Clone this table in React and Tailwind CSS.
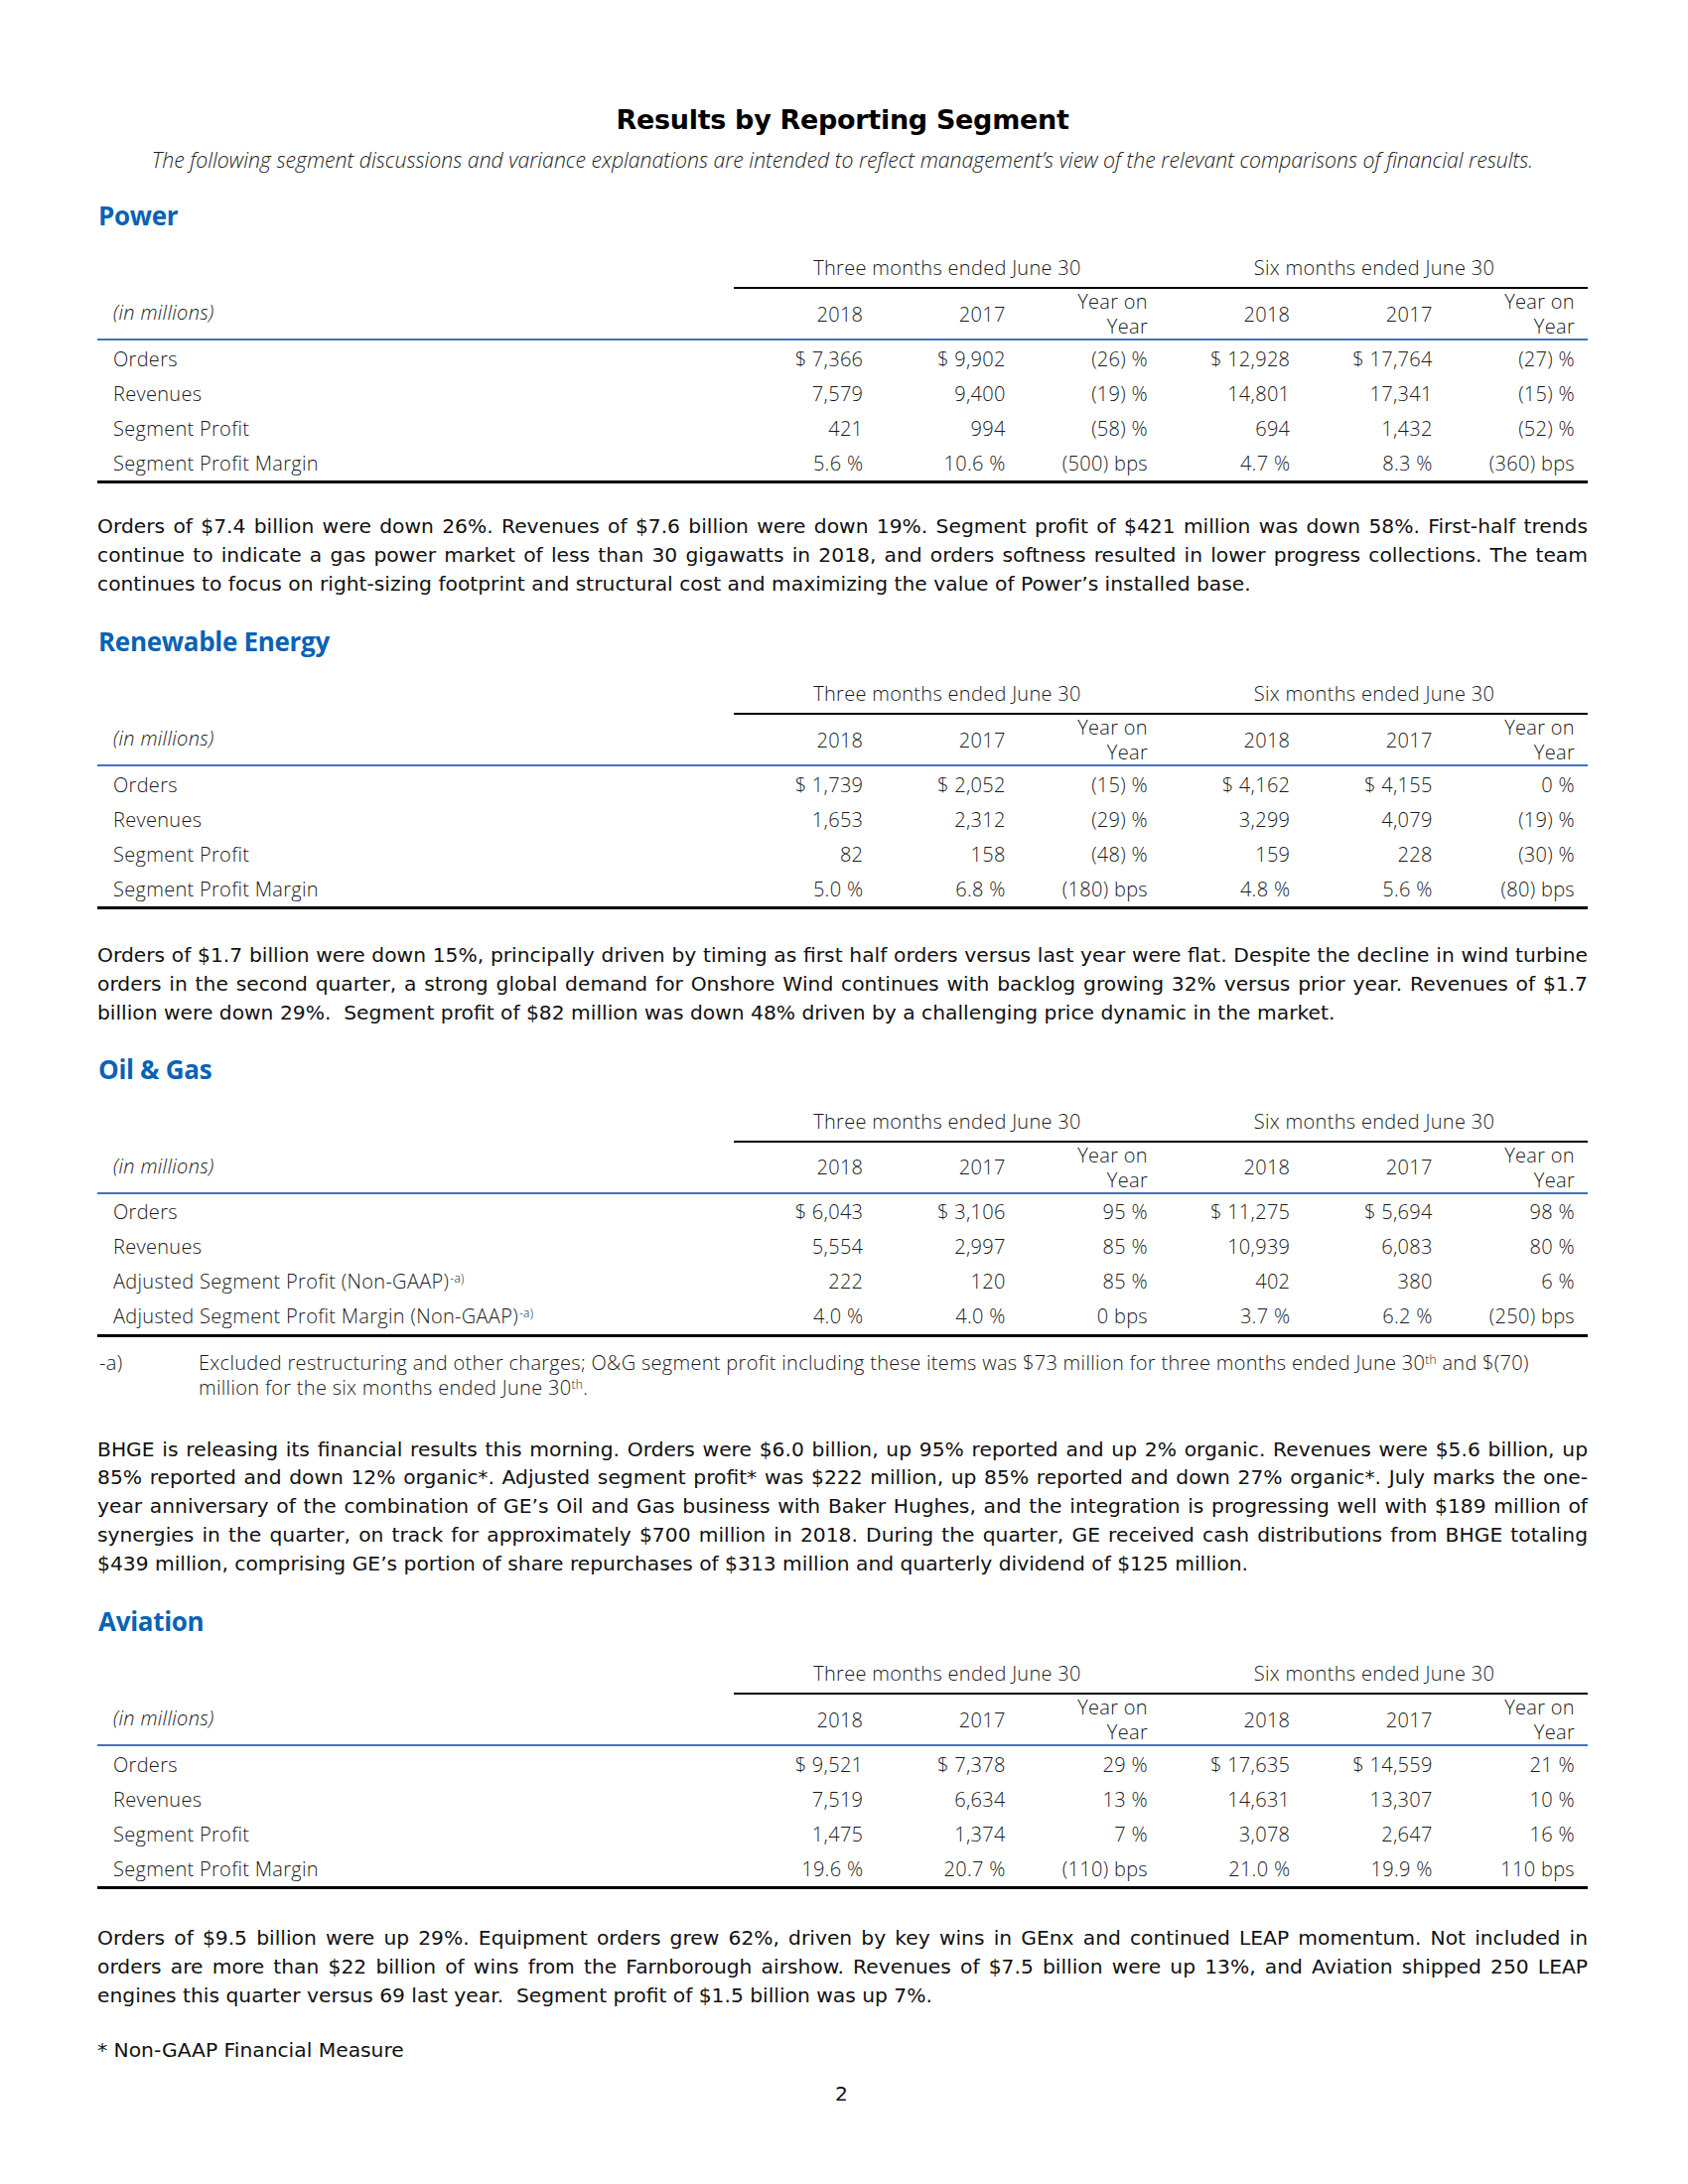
import React from 'react';

const segments = [
  {
    name: 'Power',
    top: 'mt-[27px]',
    paraTop: 'mt-[29px]',
    rows: [
      ['Orders', '$ 7,366', '$ 9,902', '(26) %', '$ 12,928', '$ 17,764', '(27) %'],
      ['Revenues', '7,579', '9,400', '(19) %', '14,801', '17,341', '(15) %'],
      ['Segment Profit', '421', '994', '(58) %', '694', '1,432', '(52) %'],
      ['Segment Profit Margin', '5.6 %', '10.6 %', '(500) bps', '4.7 %', '8.3 %', '(360) bps'],
    ],
    lines: [
      'Orders of $7.4 billion were down 26%. Revenues of $7.6 billion were down 19%. Segment profit of $421 million was down 58%. First-half trends',
      'continue to indicate a gas power market of less than 30 gigawatts in 2018, and orders softness resulted in lower progress collections. The team',
      'continues to focus on right-sizing footprint and structural cost and maximizing the value of Power’s installed base.',
    ],
  },
  {
    name: 'Renewable Energy',
    top: 'mt-[28px]',
    paraTop: 'mt-[32px]',
    rows: [
      ['Orders', '$ 1,739', '$ 2,052', '(15) %', '$ 4,162', '$ 4,155', '0 %'],
      ['Revenues', '1,653', '2,312', '(29) %', '3,299', '4,079', '(19) %'],
      ['Segment Profit', '82', '158', '(48) %', '159', '228', '(30) %'],
      ['Segment Profit Margin', '5.0 %', '6.8 %', '(180) bps', '4.8 %', '5.6 %', '(80) bps'],
    ],
    lines: [
      'Orders of $1.7 billion were down 15%, principally driven by timing as first half orders versus last year were flat. Despite the decline in wind turbine',
      'orders in the second quarter, a strong global demand for Onshore Wind continues with backlog growing 32% versus prior year. Revenues of $1.7',
      'billion were down 29%.  Segment profit of $82 million was down 48% driven by a challenging price dynamic in the market.',
    ],
  },
  {
    name: 'Oil & Gas',
    top: 'mt-[26px]',
    paraTop: 'mt-[36px]',
    rows: [
      ['Orders', '$ 6,043', '$ 3,106', '95 %', '$ 11,275', '$ 5,694', '98 %'],
      ['Revenues', '5,554', '2,997', '85 %', '10,939', '6,083', '80 %'],
      ['Adjusted Segment Profit (Non-GAAP)', '222', '120', '85 %', '402', '380', '6 %', true],
      ['Adjusted Segment Profit Margin (Non-GAAP)', '4.0 %', '4.0 %', '0 bps', '3.7 %', '6.2 %', '(250) bps', true],
    ],
    footnote: true,
    lines: [
      'BHGE is releasing its financial results this morning. Orders were $6.0 billion, up 95% reported and up 2% organic. Revenues were $5.6 billion, up',
      '85% reported and down 12% organic*. Adjusted segment profit* was $222 million, up 85% reported and down 27% organic*. July marks the one-',
      'year anniversary of the combination of GE’s Oil and Gas business with Baker Hughes, and the integration is progressing well with $189 million of',
      'synergies in the quarter, on track for approximately $700 million in 2018. During the quarter, GE received cash distributions from BHGE totaling',
      '$439 million, comprising GE’s portion of share repurchases of $313 million and quarterly dividend of $125 million.',
    ],
  },
  {
    name: 'Aviation',
    top: 'mt-[28px]',
    paraTop: 'mt-[35px]',
    rows: [
      ['Orders', '$ 9,521', '$ 7,378', '29 %', '$ 17,635', '$ 14,559', '21 %'],
      ['Revenues', '7,519', '6,634', '13 %', '14,631', '13,307', '10 %'],
      ['Segment Profit', '1,475', '1,374', '7 %', '3,078', '2,647', '16 %'],
      ['Segment Profit Margin', '19.6 %', '20.7 %', '(110) bps', '21.0 %', '19.9 %', '110 bps'],
    ],
    lines: [
      'Orders of $9.5 billion were up 29%. Equipment orders grew 62%, driven by key wins in GEnx and continued LEAP momentum. Not included in',
      'orders are more than $22 billion of wins from the Farnborough airshow. Revenues of $7.5 billion were up 13%, and Aviation shipped 250 LEAP',
      'engines this quarter versus 69 last year.  Segment profit of $1.5 billion was up 7%.',
    ],
  },
];

// each printed line is its own block so the breaks match the page
const Paragraph = ({ lines }) => (
  <div className="font-['DejaVu_Sans',sans-serif] text-[20.25px] leading-[28.75px] text-[#111]">
    {lines.map((line, i) => (
      <div
        key={i}
        className={`whitespace-pre ${i < lines.length - 1 ? 'text-justify [text-align-last:justify]' : 'text-left'}`}
      >
        {line}
      </div>
    ))}
  </div>
);

const SegmentTable = ({ rows }) => (
  <div className="font-['Open_Sans',sans-serif] font-light text-[20px] tracking-[0.3px] text-[#1a1a1a]">
    <div className="grid grid-cols-[641px_repeat(6,1fr)] h-[38px] items-center">
      <div />
      <div className="col-span-3 text-center">Three months ended June 30</div>
      <div className="col-span-3 text-center">Six months ended June 30</div>
    </div>
    <div className="grid grid-cols-[641px_repeat(6,1fr)] h-[54px] items-center border-b-2 border-[#4472c4]">
      <div className="pl-4 italic">(in millions)</div>
      {['2018', '2017', 'YoY', '2018', '2017', 'YoY'].map((h, i) => (
        <div key={i} className="h-full flex flex-col justify-center text-right pr-[13px] leading-[25px] border-t-2 border-black">
          {h === 'YoY' ? (
            <>
              <span>Year on</span>
              <span>Year</span>
            </>
          ) : (
            h
          )}
        </div>
      ))}
    </div>
    <div className="border-b-[3px] border-black pt-[1px]">
      {rows.map((r, i) => (
        <div key={i} className="grid grid-cols-[641px_repeat(6,1fr)] h-[35px] items-center">
          <div className="pl-4">
            {r[0]}
            {r[7] && <sup className="text-[12px] ml-[1px]">-a)</sup>}
          </div>
          {r.slice(1, 7).map((v, j) => (
            <div key={j} className="text-right pr-[13px]">
              {v}
            </div>
          ))}
        </div>
      ))}
    </div>
  </div>
);

const App = () => {
  return (
    <div className="w-[1700px] h-[2200px] bg-white">
      <div className="pl-[98px] pr-[101px] pt-[102px]">
        <h1 className="text-center font-['DejaVu_Sans',sans-serif] font-bold text-[27px] tracking-[-0.3px] leading-[38px] text-black">
          Results by Reporting Segment
        </h1>
        <p className="text-center font-['Open_Sans',sans-serif] font-light italic text-[21.25px] leading-[26px] text-[#222] mt-[8px]">
          The following segment discussions and variance explanations are intended to reflect management’s view of the relevant comparisons of financial results.
        </p>

        {segments.map(s => (
          <div key={s.name} className={s.top}>
            <h2 className="font-['Open_Sans',sans-serif] font-bold text-[26px] tracking-[-0.3px] leading-[32px] text-[#0a62b5] pl-[1px]">
              {s.name}
            </h2>
            <div className="mt-[18px]">
              <SegmentTable rows={s.rows} />
            </div>
            {s.footnote && (
              <div className="flex font-['Open_Sans',sans-serif] font-light text-[20px] tracking-[0.3px] leading-[25px] text-[#1a1a1a] mt-[13px] pl-[2px]">
                <div className="w-[100px] shrink-0">-a)</div>
                <div>
                  Excluded restructuring and other charges; O&amp;G segment profit including these items was $73 million for three months ended June 30
                  <sup className="text-[12px]">th</sup> and $(70)
                  <br />
                  million for the six months ended June 30<sup className="text-[12px]">th</sup>.
                </div>
              </div>
            )}
            <div className={s.paraTop}>
              <Paragraph lines={s.lines} />
            </div>
          </div>
        ))}

        <div className="mt-[26px] font-['DejaVu_Sans',sans-serif] text-[20.25px] leading-[28px] text-[#111]">
          * Non-GAAP Financial Measure
        </div>
        <div className="mt-[16px] text-center font-['DejaVu_Sans',sans-serif] text-[20.25px] leading-[28px] text-[#111] pr-[2px]">2</div>
      </div>
    </div>
  );
};

export default App;
